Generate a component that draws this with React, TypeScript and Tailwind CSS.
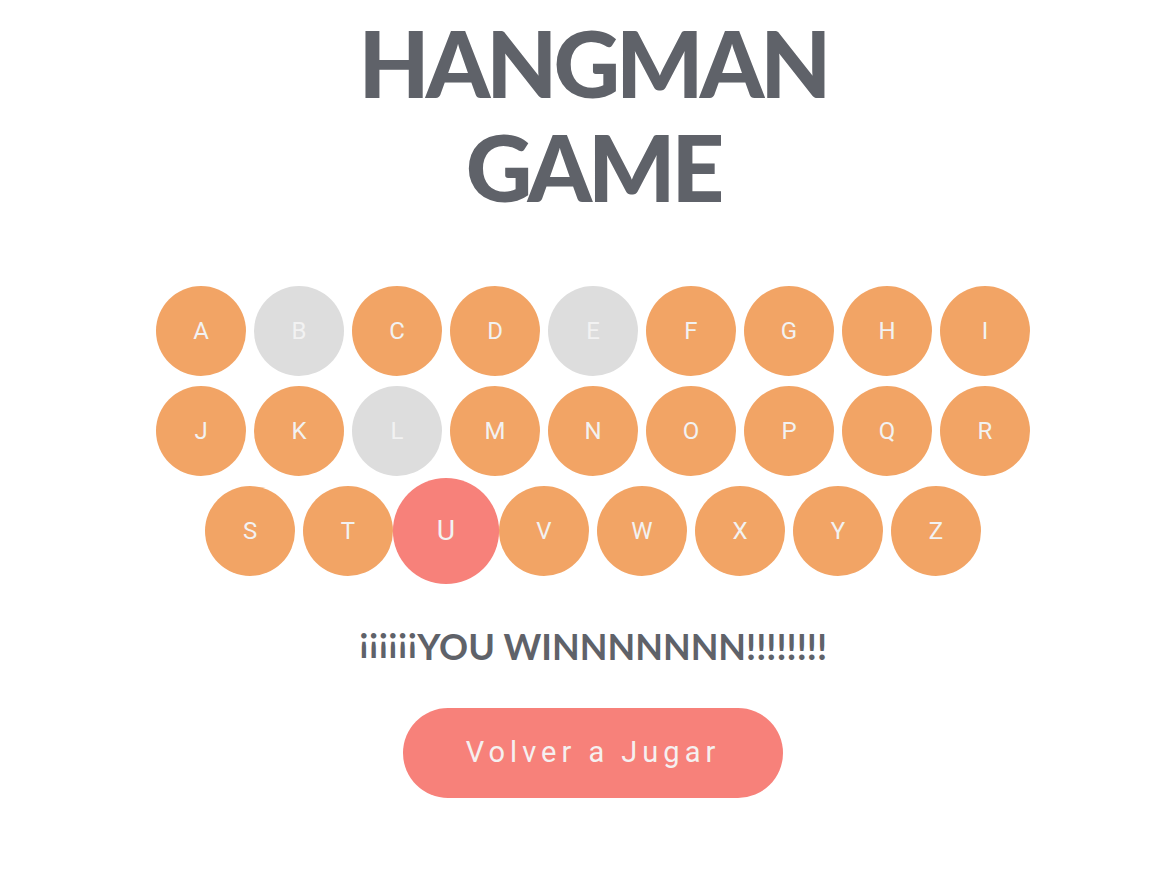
import React from "react";

const rows: string[][] = [
  ["A", "B", "C", "D", "E", "F", "G", "H", "I"],
  ["J", "K", "L", "M", "N", "O", "P", "Q", "R"],
  ["S", "T", "U", "V", "W", "X", "Y", "Z"],
];

const used = new Set(["B", "E", "L"]);

function Letter({ l }: { l: string }) {
  const isUsed = used.has(l);
  const isActive = l === "U";
  const bg = isActive ? "bg-[#f7817a] scale-[1.18]" : isUsed ? "bg-[#dddddd]" : "bg-[#f2a465]";
  return (
    <button
      className={`w-[90px] h-[90px] rounded-full flex items-center justify-center text-[24px] text-[#f2f2f2] font-['Roboto','Liberation_Sans',sans-serif] ${bg}`}
    >
      {l}
    </button>
  );
}

export default function App() {
  return (
    <div className="min-h-[890px] bg-white pl-[28px] flex flex-col items-center">
      <h1 className="mt-[11px] text-center text-[92px] leading-[104px] font-black text-[#5f6269] tracking-[-4px] font-['Lato','Open_Sans',sans-serif]">
        HANGMAN
        <br />
        GAME
      </h1>
      <div className="mt-[67px] w-[874px] flex flex-col gap-[10px]">
        {rows.map((r, i) => (
          <div key={i} className="flex justify-center gap-[8px]">
            {r.map((l) => (
              <Letter key={l} l={l} />
            ))}
          </div>
        ))}
      </div>
      <p className="mt-[48px] text-[36px] leading-[44px] font-bold text-[#5f6269] font-['Lato','Open_Sans',sans-serif]">
        <span className="inline-block -translate-y-[8px]">¡¡¡¡¡¡</span>YOU WINNNNNNN!!!!!!!!
      </p>
      <button className="mt-[40px] w-[380px] h-[90px] rounded-full bg-[#f7817a] text-[#f5f0f0] text-[29px] tracking-[5px] flex items-center justify-center font-['Roboto','Liberation_Sans',sans-serif]">
        Volver a Jugar
      </button>
    </div>
  );
}
